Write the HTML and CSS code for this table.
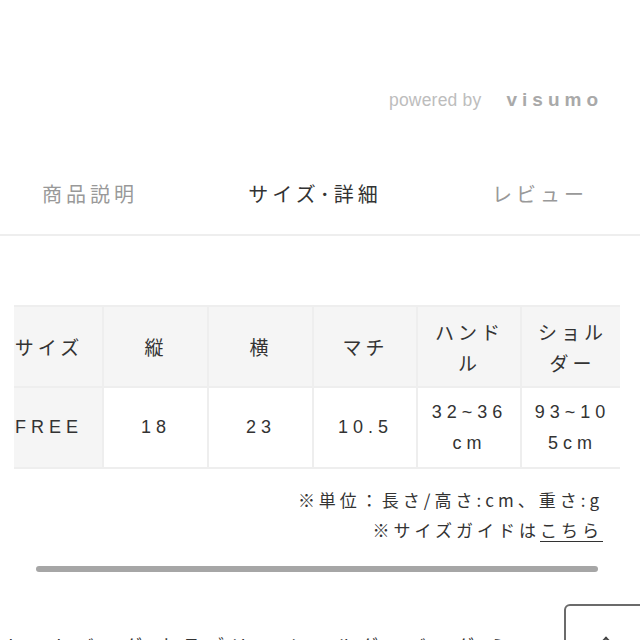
FILE: index.html
```html
<!DOCTYPE html>
<html lang="ja">
<head>
<meta charset="utf-8">
<link rel="stylesheet" href="styles.css">
</head>
<body>
<div class="page">
  <div class="powered">
    <span class="powered-by">powered by</span>
    <span class="visumo">visumo</span>
  </div>
  <nav class="tabs">
    <span class="tab">商品説明</span>
    <span class="tab active">サイズ･詳細</span>
    <span class="tab">レビュー</span>
  </nav>
  <div class="table-scroll">
    <table class="size-table">
      <colgroup>
        <col class="w1"><col class="w2"><col class="w3"><col class="w4"><col class="w5"><col class="w6">
      </colgroup>
      <tr class="head">
        <td>サイズ</td>
        <td>縦</td>
        <td>横</td>
        <td>マチ</td>
        <td>ハンドル</td>
        <td>ショルダー</td>
      </tr>
      <tr class="body">
        <td class="label">FREE</td>
        <td>18</td>
        <td>23</td>
        <td>10.5</td>
        <td>32~36cm</td>
        <td>93~105cm</td>
      </tr>
    </table>
  </div>
  <div class="notes">
    <p class="note">※単位：長さ/高さ:cm、重さ:g</p>
    <p class="note">※サイズガイドは<a class="link">こちら</a></p>
  </div>
  <div class="scrollbar-track"><div class="scrollbar-thumb"></div></div>
  <div class="bottom">
    <p class="bottom-text">トートバッグ カラブリー ショルダーバッグ ミニ</p>
  </div>
  <div class="to-top"><span class="arrow"></span></div>
</div>
</body>
</html>
```
FILE: styles.css
```css
html, body {
  margin: 0;
  padding: 0;
  background: #fff;
}
body {
  font-family: "Noto Sans CJK JP", "Liberation Sans", sans-serif;
  color: #333;
  width: 640px;
  height: 640px;
  overflow: hidden;
}
.page {
  position: relative;
  display: flex;
  flex-direction: column;
  height: 640px;
  overflow: hidden;
}
.page > * {
  flex-shrink: 0;
}
.powered {
  display: flex;
  justify-content: flex-end;
  align-items: center;
  padding: 86px 37px 0 0;
  height: 28px;
  gap: 25px;
}
.powered-by {
  font-family: "Liberation Sans", sans-serif;
  font-size: 17.5px;
  color: #bdbdbd;
  letter-spacing: 0.2px;
}
.visumo {
  font-family: "Liberation Sans", sans-serif;
  font-weight: bold;
  font-size: 19px;
  letter-spacing: 5px;
  color: #a9a9a9;
}
.tabs {
  display: flex;
  justify-content: space-between;
  align-items: flex-end;
  padding: 0 56px 26px 42px;
  height: 122px;
  border-bottom: 2px solid #eeeeee;
  box-sizing: border-box;
}
.tab {
  font-size: 20px;
  line-height: 28px;
  letter-spacing: 4px;
  color: #999;
  margin-right: -4px;
}
.tab.active {
  color: #333;
}
.table-scroll {
  margin-top: 69px;
  margin-left: 14px;
  width: 606px;
  overflow: hidden;
  padding-bottom: 2px;
}
.size-table {
  border-collapse: collapse;
  margin-left: -21px;
  table-layout: fixed;
  width: 629px;
}
.w1 { width: 109px; }
.w2 { width: 105px; }
.w3 { width: 105px; }
.w4 { width: 104px; }
.w5 { width: 104px; }
.w6 { width: 102px; }
.size-table td {
  border: 2px solid #eeeeee;
  text-align: center;
  vertical-align: middle;
  font-size: 19px;
  letter-spacing: 4px;
  line-height: 31px;
  padding: 8px 9px 8px 10px;
  word-break: break-all;
  height: 63px;
  box-sizing: content-box;
}
.size-table .head td {
  background: #f5f5f5;
}
.size-table .body td {
  font-family: "Liberation Sans", "Noto Sans CJK JP", sans-serif;
  font-size: 18px;
  letter-spacing: 5px;
}
.size-table .body td.label {
  background: #f5f5f5;
}
.notes {
  margin-top: 14px;
  padding-right: 37px;
  text-align: right;
}
.note {
  margin: 0;
  font-size: 17px;
  line-height: 30px;
  letter-spacing: 4px;
  color: #333;
}
.link {
  text-decoration: underline;
  text-underline-offset: 4px;
  color: #333;
}
.scrollbar-track {
  margin: 21px 42px 0 36px;
  height: 6px;
}
.scrollbar-thumb {
  height: 6px;
  border-radius: 3px;
  background: #a6a6a6;
}
.bottom {
  margin-top: 61px;
  padding-left: 4px;
}
.bottom-text {
  margin: 0;
  font-size: 18px;
  letter-spacing: 6px;
  line-height: 24px;
  white-space: nowrap;
  color: #333;
}
.to-top {
  position: absolute;
  left: 564px;
  top: 604px;
  width: 100px;
  height: 80px;
  border: 2px solid #6b6b6b;
  border-radius: 6px;
  background: #fff;
}
.arrow {
  position: absolute;
  left: 34px;
  top: 33px;
  width: 10px;
  height: 10px;
  border-left: 2px solid #444;
  border-top: 2px solid #444;
  transform: rotate(45deg);
}
```
